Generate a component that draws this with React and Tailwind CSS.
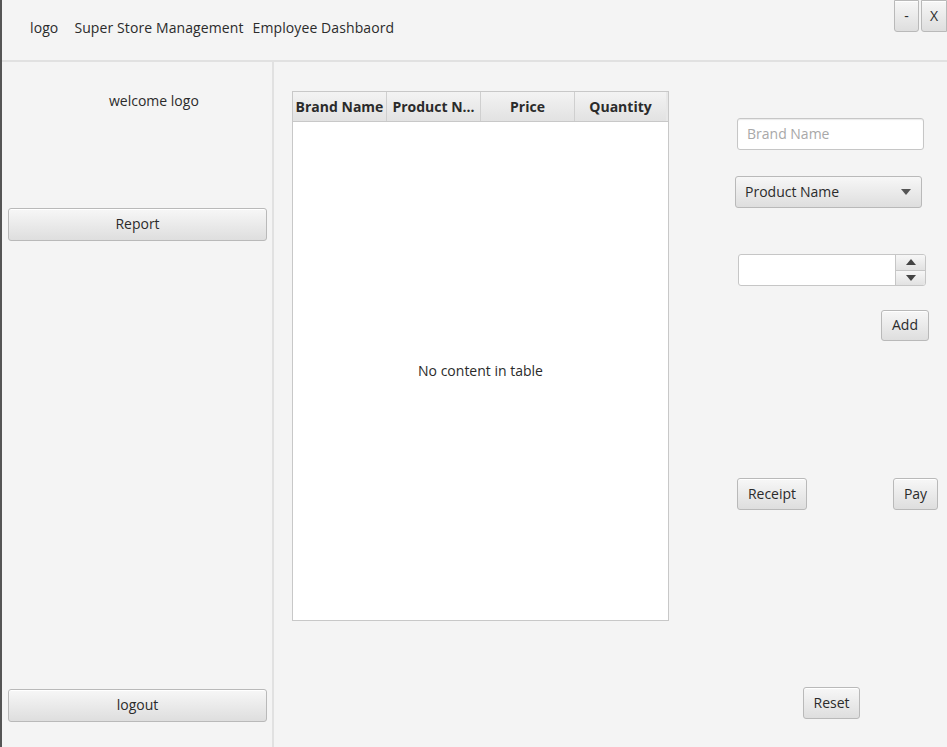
import React from "react";

const font = { fontFamily: '"Open Sans", "Noto Sans", sans-serif' };

function Btn({ className = "", children }) {
  return (
    <div
      className={
        "flex items-center justify-center rounded-[3px] border border-[#b9b9b9] bg-gradient-to-b from-[#f7f7f7] to-[#dedede] text-[14px] leading-[18px] pb-[1px] text-[#2b2b2b] shadow-[inset_0_1px_0_#ffffff] " +
        className
      }
    >
      {children}
    </div>
  );
}

export default function App() {
  return (
    <div
      className="w-[947px] h-[747px] bg-[#f4f4f4] text-[#2b2b2b] border-l-2 border-[#555] flex flex-col overflow-hidden"
      style={font}
    >
      {/* header */}
      <div className="h-[62px] shrink-0 border-b-2 border-[#e1e1e1] flex items-start">
        <div className="flex items-center h-[54px] text-[14px] pl-[28px] tracking-[0.1px]">
          <span>logo</span>
          <span className="ml-[16px]">Super Store Management</span>
          <span className="ml-[9px]">Employee Dashbaord</span>
        </div>
        <div className="ml-auto flex gap-[2px]">
          <Btn className="w-[25px] h-[32px] rounded-t-none">-</Btn>
          <Btn className="w-[26px] h-[32px] rounded-t-none rounded-r-none">X</Btn>
        </div>
      </div>

      {/* body */}
      <div className="flex flex-1 min-h-0">
        {/* sidebar */}
        <div className="w-[272px] shrink-0 border-r-2 border-[#e1e1e1] flex flex-col">
          <div className="mt-[30px] ml-[107px] text-[14px] leading-[18px]">welcome logo</div>
          <Btn className="mt-[98px] ml-[6px] w-[259px] h-[33px]">Report</Btn>
          <Btn className="mt-auto mb-[25px] ml-[6px] w-[259px] h-[33px]">logout</Btn>
        </div>

        {/* main */}
        <div className="flex flex-1 min-w-0">
          {/* table */}
          <div className="mt-[29px] ml-[18px] w-[377px] h-[530px] border border-[#c8c8c8] bg-white flex flex-col shrink-0">
            <div className="h-[30px] flex border-b border-[#c8c8c8] bg-gradient-to-b from-[#f3f3f3] to-[#e2e2e2] text-[14px] font-bold text-[#2b2b2b]">
              <div className="w-[94px] border-r border-[#cfcfcf] flex items-center justify-center whitespace-nowrap overflow-hidden">
                Brand Name
              </div>
              <div className="w-[94px] border-r border-[#cfcfcf] flex items-center justify-center whitespace-nowrap overflow-hidden">
                Product N...
              </div>
              <div className="w-[94px] border-r border-[#cfcfcf] flex items-center justify-center">Price</div>
              <div className="w-[91px] flex items-center justify-center">Quantity</div>
              <div className="flex-1 bg-[#e8e8e8]"></div>
            </div>
            <div className="flex-1 flex items-center justify-center text-[14px] pb-[1px]">No content in table</div>
          </div>

          {/* right controls */}
          <div className="flex flex-col pt-[56px] flex-1">
            <div className="ml-[68px] w-[187px] h-[32px] rounded-[3px] border border-[#c6c6c6] bg-white flex items-center px-[9px] pb-[1px] text-[14px] text-[#a8a8a8] shadow-[inset_0_1px_1px_#eaeaea]">
              Brand Name
            </div>
            <div className="mt-[26px] ml-[66px] w-[187px] h-[32px] rounded-[3px] border border-[#b9b9b9] bg-gradient-to-b from-[#f7f7f7] to-[#dedede] flex items-center pl-[9px] pr-[10px] pb-[1px] text-[14px]">
              <span>Product Name</span>
              <svg className="ml-auto" width="10" height="6" viewBox="0 0 10 6">
                <path d="M0 0 L10 0 L5 6 Z" fill="#555" />
              </svg>
            </div>
            <div className="mt-[46px] ml-[69px] w-[188px] h-[32px] rounded-[3px] border border-[#c6c6c6] bg-white flex overflow-hidden">
              <div className="flex-1"></div>
              <div className="w-[30px] flex flex-col border-l border-[#c6c6c6]">
                <div className="flex-1 flex items-center justify-center bg-gradient-to-b from-[#f7f7f7] to-[#e2e2e2] border-b border-[#c6c6c6]">
                  <svg width="10" height="6" viewBox="0 0 10 6">
                    <path d="M0 6 L10 6 L5 0 Z" fill="#444" />
                  </svg>
                </div>
                <div className="flex-1 flex items-center justify-center bg-gradient-to-b from-[#f7f7f7] to-[#e2e2e2]">
                  <svg width="10" height="6" viewBox="0 0 10 6">
                    <path d="M0 0 L10 0 L5 6 Z" fill="#444" />
                  </svg>
                </div>
              </div>
            </div>
            <Btn className="mt-[24px] ml-[212px] w-[48px] h-[31px]">Add</Btn>
            <div className="mt-[137px] flex">
              <Btn className="ml-[68px] w-[70px] h-[32px]">Receipt</Btn>
              <Btn className="ml-[86px] w-[45px] h-[32px]">Pay</Btn>
            </div>
            <Btn className="mt-[177px] ml-[134px] w-[57px] h-[32px]">Reset</Btn>
          </div>
        </div>
      </div>
    </div>
  );
}
